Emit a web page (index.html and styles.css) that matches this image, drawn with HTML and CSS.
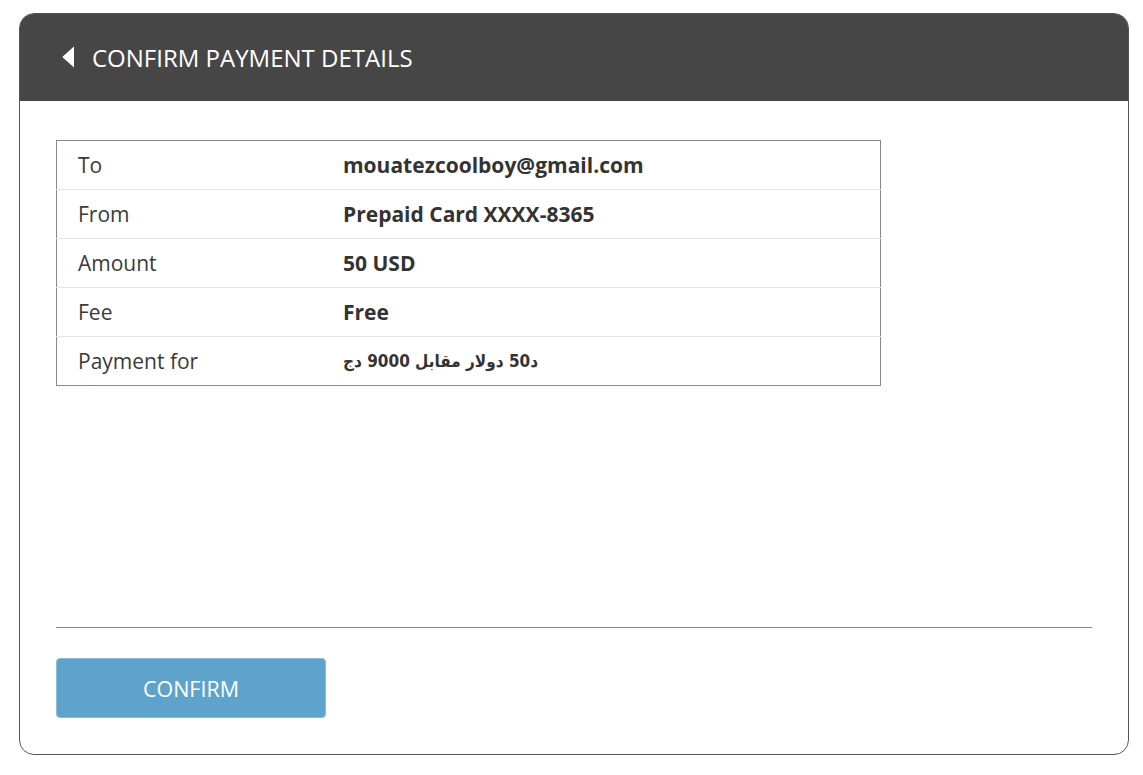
FILE: index.html
```html
<!DOCTYPE html>
<html>
<head>
<meta charset="utf-8">
<link rel="stylesheet" href="styles.css">
</head>
<body>
<div class="card">
  <div class="card-header">
    <svg class="back" width="12" height="22" viewBox="0 0 12 22"><path d="M12 0.5 L12 21.5 L1 11.8 Q0.2 11 1 10.2 Z" fill="#fff"/></svg>
    <span class="title">CONFIRM PAYMENT DETAILS</span>
  </div>
  <div class="card-body">
    <table class="details">
      <tr><td class="label">To</td><td class="value">mouatezcoolboy@gmail.com</td></tr>
      <tr><td class="label">From</td><td class="value">Prepaid Card XXXX-8365</td></tr>
      <tr><td class="label">Amount</td><td class="value">50 USD</td></tr>
      <tr><td class="label">Fee</td><td class="value">Free</td></tr>
      <tr><td class="label">Payment for</td><td class="value arabic">د50 دولار مقابل 9000 دج</td></tr>
    </table>
    <div class="spacer"></div>
    <hr class="divider">
    <button class="confirm">CONFIRM</button>
  </div>
</div>
</body>
</html>
```
FILE: styles.css
```css
html, body {
  margin: 0;
  padding: 0;
  background: #fff;
  font-family: "Open Sans", "DejaVu Sans", sans-serif;
}
.card {
  margin: 13px 0 0 19px;
  width: 1108px;
  height: 740px;
  border: 1px solid #555;
  border-radius: 15px;
  overflow: hidden;
  display: flex;
  flex-direction: column;
  box-sizing: content-box;
}
.card-header {
  height: 87px;
  background: #464646;
  display: flex;
  align-items: center;
  padding-left: 42px;
  flex-shrink: 0;
}
.back {
  display: block;
  margin-right: 18px;
  margin-top: -1px;
}
.title {
  color: #fff;
  font-size: 24px;
  line-height: 1;
}
.card-body {
  flex: 1;
  display: flex;
  flex-direction: column;
  padding: 39px 36px 36px 36px;
}
.details {
  width: 825px;
  border-collapse: collapse;
  border: 1px solid #888;
  font-size: 21px;
  color: #333;
}
.details td {
  height: 48px;
  padding: 0;
  border-top: 1px solid #e6e6e6;
  vertical-align: middle;
}
.details tr:first-child td {
  border-top: none;
}
.details .label {
  width: 265px;
  padding-left: 21px;
  color: #3a3a3a;
}
.details .value {
  font-weight: bold;
}
.arabic {
  font-family: "DejaVu Sans Condensed", "DejaVu Sans", sans-serif;
  font-size: 17px;
}
.spacer {
  flex: 1;
}
.divider {
  margin: 0;
  border: none;
  border-top: 1px solid #888;
  height: 0;
}
.confirm {
  margin-top: 30px;
  width: 270px;
  height: 60px;
  background: #5ea3cb;
  border: 1px solid #8cbcd9;
  border-radius: 4px;
  color: #fff;
  font-family: "Open Sans", sans-serif;
  font-size: 21.5px;
  padding: 0;
  text-align: center;
}
```
